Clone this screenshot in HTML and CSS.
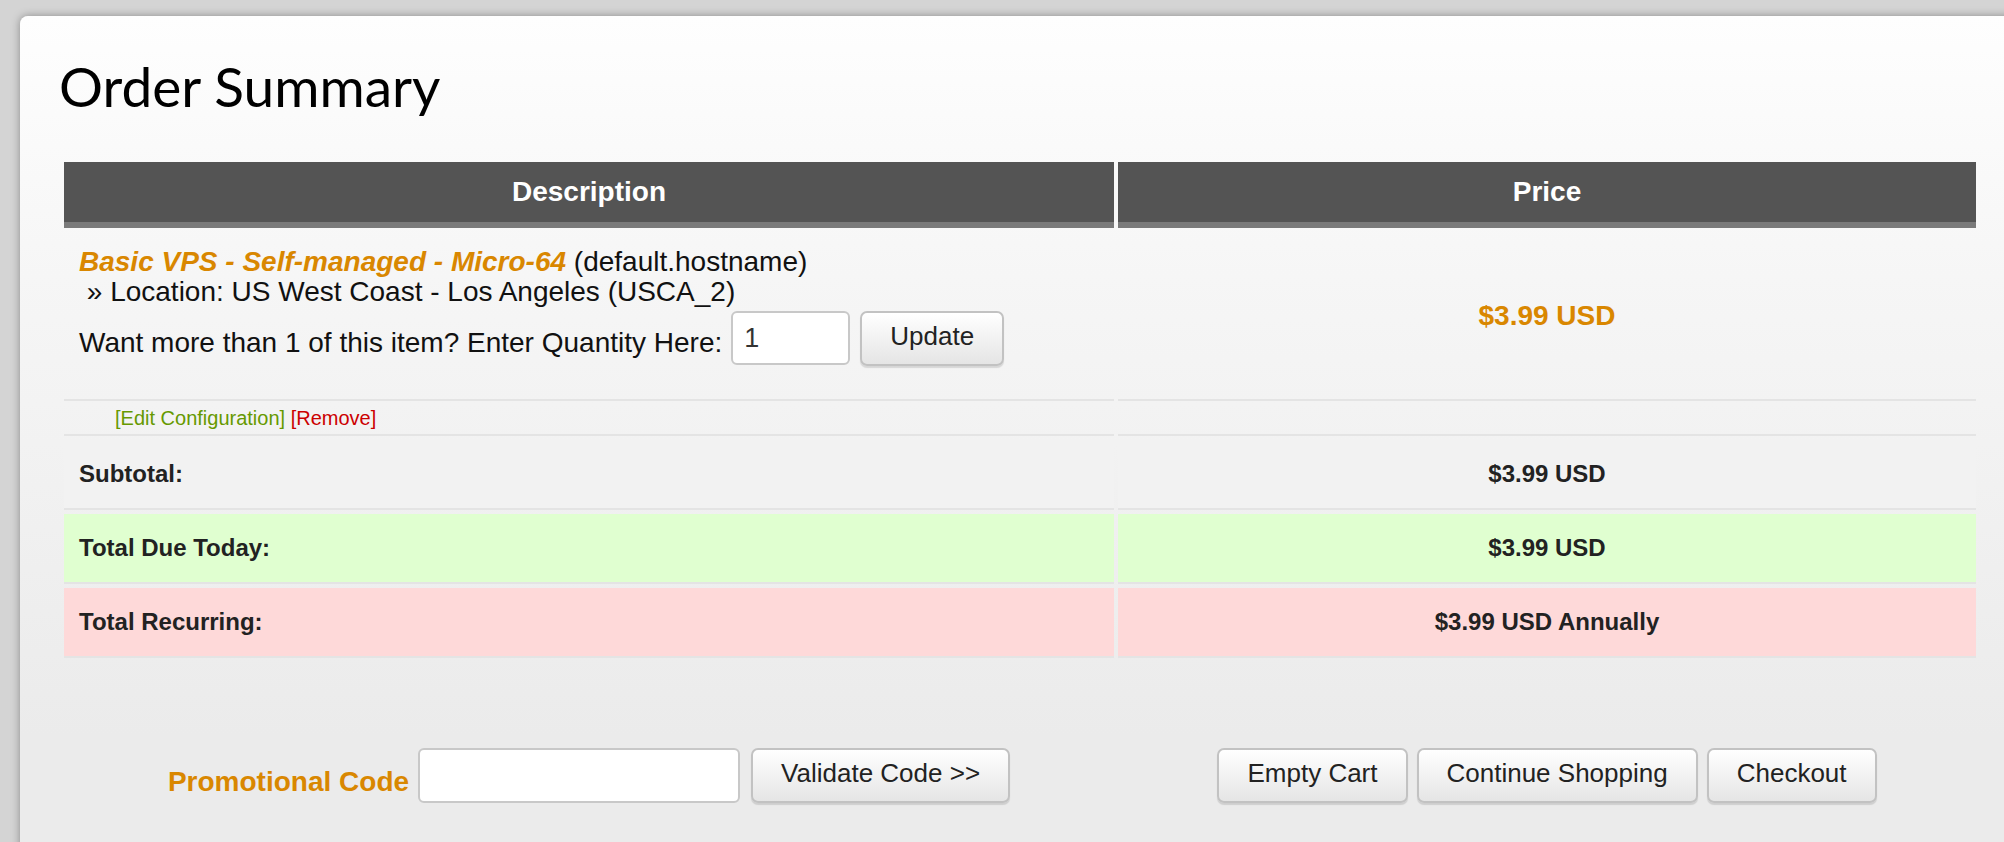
FILE: index.html
```html
<!DOCTYPE html>
<html lang="en">
<head>
<meta charset="utf-8">
<title>Order Summary</title>
<link rel="stylesheet" href="styles.css">
</head>
<body>
<div class="card">
  <h1 class="title">Order Summary</h1>
  <table class="cart">
    <thead>
      <tr><th class="col-desc">Description</th><th class="col-price">Price</th></tr>
    </thead>
    <tbody>
      <tr class="item">
        <td class="desc">
          <div class="line"><strong class="pname">Basic VPS - Self-managed - Micro-64</strong> (default.hostname)</div>
          <div class="line">&nbsp;&raquo; Location: US West Coast - Los Angeles (USCA_2)</div>
          <div class="qty">
            <span class="qty-label">Want more than 1 of this item? Enter Quantity Here:</span>
            <input class="field qty-input" type="text" value="1">
            <button class="btn update">Update</button>
          </div>
        </td>
        <td class="price">$3.99 USD</td>
      </tr>
      <tr class="actions">
        <td><a class="edit">[Edit Configuration]</a> <a class="remove">[Remove]</a></td>
        <td></td>
      </tr>
      <tr class="total subtotal">
        <td class="label">Subtotal:</td>
        <td class="amount">$3.99 USD</td>
      </tr>
      <tr class="total due">
        <td class="label">Total Due Today:</td>
        <td class="amount">$3.99 USD</td>
      </tr>
      <tr class="total recurring">
        <td class="label">Total Recurring:</td>
        <td class="amount">$3.99 USD Annually</td>
      </tr>
    </tbody>
  </table>
  <div class="bottom">
    <div class="promo">
      <span class="promo-label">Promotional Code</span>
      <input class="field promo-input" type="text" value="">
      <button class="btn">Validate Code &gt;&gt;</button>
    </div>
    <div class="cart-btns">
      <button class="btn">Empty Cart</button>
      <button class="btn">Continue Shopping</button>
      <button class="btn">Checkout</button>
    </div>
  </div>
</div>
</body>
</html>
```

FILE: styles.css
```css
html, body {
  margin: 0;
  padding: 0;
}
body {
  background: #d4d4d4;
  height: 842px;
  overflow: hidden;
  font-family: "Liberation Sans", Arial, sans-serif;
  color: #111;
}
.card {
  margin: 16px 0 0 20px;
  width: 2010px;
  height: 900px;
  box-sizing: border-box;
  padding: 42px 0 0 40px;
  border-radius: 8px;
  background: linear-gradient(#fefefe 0px, #f6f6f6 260px, #ebebeb 720px);
  box-shadow: 0 0 9px rgba(0, 0, 0, 0.35);
}
.title {
  margin: 0 0 44px -1px;
  font-family: Lato, "Open Sans", sans-serif;
  font-weight: 400;
  font-size: 55px;
  line-height: 56px;
  color: #000;
}
.cart {
  border-collapse: separate;
  border-spacing: 4px;
  width: 1920px;
  table-layout: fixed;
}
.col-desc { width: 1050px; }
.col-price { width: 858px; }
.cart th {
  height: 60px;
  padding: 0;
  background: #545454;
  border-bottom: 6px solid #7a7a7a;
  color: #fff;
  font-size: 28px;
  font-weight: bold;
  text-align: center;
  vertical-align: middle;
}
.cart td {
  border-bottom: 2px solid #e4e4e4;
  padding: 0;
}
.cart td.desc {
  padding: 15px 15px 33px;
  font-size: 28px;
  line-height: 30px;
  vertical-align: top;
}
.pname {
  color: #d98700;
  font-style: italic;
}
.qty {
  display: flex;
  align-items: flex-start;
  margin-top: 4px;
}
.qty-label {
  margin-top: 17px;
}
.field {
  box-sizing: border-box;
  height: 54px;
  border: 2px solid #c8c8c8;
  border-radius: 6px;
  background: #fff;
  font-family: "Liberation Sans", Arial, sans-serif;
  color: #333;
  outline: none;
}
.qty-input {
  width: 119px;
  margin: 0 10px 0 9px;
  padding: 0 11px;
  font-size: 27px;
}
.btn {
  box-sizing: border-box;
  height: 55px;
  padding: 0 28px 4px;
  border: 2px solid #c2c2c2;
  border-radius: 7px;
  background: linear-gradient(#ffffff, #e5e5e5);
  box-shadow: 0 2px 1px rgba(0, 0, 0, 0.12);
  font-family: "Liberation Sans", Arial, sans-serif;
  font-size: 26px;
  color: #222;
  white-space: nowrap;
}
.cart td.price {
  color: #d98700;
  font-size: 28px;
  font-weight: bold;
  text-align: center;
  vertical-align: middle;
}
.cart .actions td {
  height: 29px;
  padding: 0 0 0 51px;
  font-size: 20px;
  line-height: 27px;
  vertical-align: top;
}
.edit { color: #669900; }
.remove { color: #cc0000; }
.cart .total td {
  height: 68px;
  font-size: 24px;
  font-weight: bold;
  color: #222;
  vertical-align: middle;
}
.cart .total .label { padding-left: 15px; }
.cart .total .amount { text-align: center; }
.cart .subtotal td { background: #f2f2f2; }
.cart .due td { background: #e0ffd0; }
.cart .recurring td { background: #fed9d9; }
.bottom {
  display: grid;
  grid-template-columns: 1050px 858px;
  column-gap: 4px;
  margin: 86px 0 0 4px;
}
.promo, .cart-btns {
  display: flex;
  justify-content: center;
  align-items: flex-start;
}
.promo-label {
  align-self: flex-end;
  margin: 0 9px 6px 0;
  color: #d98700;
  font-size: 28px;
  line-height: 30px;
  font-weight: bold;
}
.promo-input {
  width: 322px;
  height: 55px;
  margin-right: 11px;
}
.cart-btns {
  gap: 9px;
}
```
